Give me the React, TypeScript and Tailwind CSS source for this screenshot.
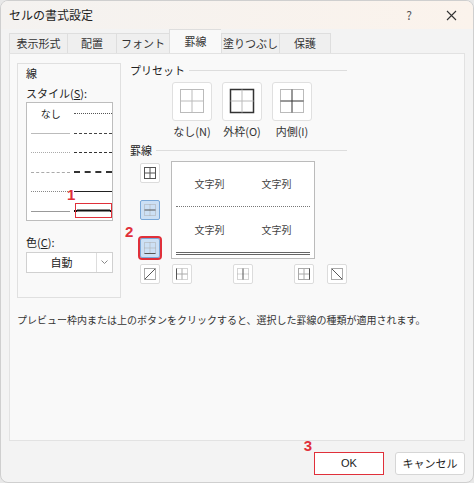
import React from "react";

const jp = { fontFamily: '"Noto Sans CJK JP", "Noto Sans", sans-serif' };

const Cell = ({ variant }: { variant: string }) => {
  const s = "#555";
  return (
    <svg width="14" height="14" viewBox="0 0 14 14">
      {variant === "all" && (
        <g stroke={s} fill="none" strokeWidth="1">
          <rect x="1.5" y="1.5" width="11" height="11" />
          <path d="M7 1.5V12.5M1.5 7H12.5" />
        </g>
      )}
      {variant === "mid" && (
        <g fill="none" strokeWidth="1">
          <rect x="1.5" y="1.5" width="11" height="11" stroke="#aaa" strokeDasharray="1 1" />
          <path d="M7 1.5V12.5" stroke="#aaa" strokeDasharray="1 1" />
          <path d="M1.5 7H12.5" stroke={s} />
        </g>
      )}
      {variant === "bottom" && (
        <g fill="none" strokeWidth="1">
          <rect x="1.5" y="1.5" width="11" height="11" stroke="#aaa" strokeDasharray="1 1" />
          <path d="M7 1.5V12.5M1.5 7H12.5" stroke="#aaa" strokeDasharray="1 1" />
          <path d="M1.5 12.5H12.5" stroke={s} />
        </g>
      )}
      {variant === "diag1" && (
        <g fill="none" strokeWidth="1">
          <rect x="1.5" y="1.5" width="11" height="11" stroke="#aaa" />
          <path d="M2 12L12 2" stroke={s} />
        </g>
      )}
      {variant === "diag2" && (
        <g fill="none" strokeWidth="1">
          <rect x="1.5" y="1.5" width="11" height="11" stroke="#aaa" />
          <path d="M2 2L12 12" stroke={s} />
        </g>
      )}
      {variant === "left" && (
        <g fill="none" strokeWidth="1">
          <rect x="1.5" y="1.5" width="11" height="11" stroke="#aaa" strokeDasharray="1 1" />
          <path d="M7 1.5V12.5M1.5 7H12.5" stroke="#aaa" />
          <path d="M1.5 1.5V12.5" stroke={s} />
        </g>
      )}
      {variant === "vmid" && (
        <g fill="none" strokeWidth="1">
          <rect x="1.5" y="1.5" width="11" height="11" stroke="#aaa" strokeDasharray="1 1" />
          <path d="M1.5 7H12.5" stroke="#aaa" strokeDasharray="1 1" />
          <path d="M7 1.5V12.5" stroke={s} />
        </g>
      )}
      {variant === "right" && (
        <g fill="none" strokeWidth="1">
          <rect x="1.5" y="1.5" width="11" height="11" stroke="#aaa" />
          <path d="M7 1.5V12.5M1.5 7H12.5" stroke="#aaa" />
          <path d="M12.5 1.5V12.5" stroke={s} />
        </g>
      )}
    </svg>
  );
};

const Preset = ({ kind, label }: { kind: string; label: string }) => (
  <div className="flex flex-col items-center w-[50px]">
    <div className="w-[40px] h-[39px] bg-white border border-[#e0e0e0] rounded-[3px] flex items-center justify-center">
      <svg width="26" height="26" viewBox="0 0 26 26">
        <rect x="1.5" y="1.5" width="23" height="23" fill="none"
          stroke={kind === "outer" ? "#333" : "#bbb"} strokeWidth={kind === "outer" ? 1.5 : 1} />
        <path d="M13 1.5V24.5M1.5 13H24.5" stroke={kind === "inner" ? "#333" : "#bbb"} strokeWidth="1" />
      </svg>
    </div>
    <span className="text-[11px] text-[#333] mt-[2px]">{label}</span>
  </div>
);

const SmallBtn = ({ v, selected, red }: { v: string; selected?: boolean; red?: boolean }) => (
  <div
    className={`w-[20px] h-[20px] flex items-center justify-center rounded-[2px] border ${
      selected ? "bg-[#cce0f5] border-[#7aa8d8]" : "bg-white border-[#dcdcdc]"
    } ${red ? "outline outline-2 outline-[#e0303a]" : ""}`}
  >
    <Cell variant={v} />
  </div>
);

const LineRow = ({ a, b }: { a: React.ReactNode; b: React.ReactNode }) => (
  <div className="flex items-center h-[19.5px]">
    <div className="w-[40px] ml-[4px] flex justify-center">{a}</div>
    <div className="w-[38px] ml-[4px]">{b}</div>
  </div>
);

const L = ({ style, w = 1, c = "#555" }: { style: string; w?: number; c?: string }) => (
  <div className="w-full" style={{ borderTop: `${w}px ${style} ${c}` }} />
);

const tabs = [
  { t: "表示形式", w: "w-[58px]" },
  { t: "配置", w: "w-[49px]" },
  { t: "フォント", w: "w-[53px]" },
  { t: "罫線", w: "w-[52px]" },
  { t: "塗りつぶし", w: "w-[58px]" },
  { t: "保護", w: "w-[52px]" },
];

export default function App() {
  return (
    <div className="w-[474px] h-[483px] bg-[#e8e8e8] relative text-[#222]" style={jp}>
      <div className="absolute inset-0 rounded-[8px] bg-[#f3f3f3] border border-[#cfcfcf] overflow-hidden flex flex-col">
        {/* title bar */}
        <div className="h-[28px] flex items-center px-[8px] bg-gradient-to-r from-[#f4f2f0] to-[#fbf3ec]">
          <span className="text-[12px] flex-1">セルの書式設定</span>
          <span className="text-[12px] text-[#555] mr-[34px]">?</span>
          <svg width="11" height="11" viewBox="0 0 11 11" className="mr-[8px]">
            <path d="M1 1L10 10M10 1L1 10" stroke="#333" strokeWidth="1.1" />
          </svg>
        </div>
        {/* tabs */}
        <div className="flex items-end h-[24px] pl-[8px] text-[11px] text-[#333]">
          {tabs.map(({ t, w }, i) => (
            <div
              key={t}
              className={`${w} whitespace-nowrap flex items-center justify-center border-t border-l border-[#dedede] ${
                t === "罫線" ? "h-[24px] bg-[#f9f9f9]" : "h-[20px] bg-[#efefef]"
              } ${i === tabs.length - 1 ? "border-r" : ""}`}
            >
              {t}
            </div>
          ))}
        </div>
        {/* panel */}
        <div className="mx-[8px] h-[388px] bg-[#f9f9f9] border border-[#e2e2e2]">
          <div className="flex">
            {/* 線 group */}
            <div className="ml-[7px] mt-[9px] w-[104px] h-[235px] border border-[#e0e0e0] px-[8px] pt-[1px] text-[11px]">
              <div>線</div>
              <div className="mt-[3px]">スタイル(<u>S</u>):</div>
              <div className="mt-[1px] w-[87px] h-[119px] bg-white border border-[#bdbdbd] pt-[1px] relative">
                <LineRow a={<span className="text-[10px]">なし</span>} b={<L style="dotted" />} />
                <LineRow a={<L style="solid" w={1} c="#bbb" />} b={<L style="dashed" w={1} c="#444" />} />
                <LineRow a={<L style="dotted" c="#aaa" />} b={<L style="dashed" w={1} c="#333" />} />
                <LineRow a={<L style="dashed" c="#aaa" />} b={<L style="dashed" w={2} c="#333" />} />
                <LineRow a={<L style="dotted" c="#888" />} b={<L style="solid" w={1} c="#222" />} />
                <LineRow a={<L style="solid" c="#999" />} b={<L style="solid" w={2} c="#111" />} />
                <div className="absolute left-[48px] top-[100px] w-[37px] h-[15px] border border-[#e0303a] flex items-center px-[1px]">
                  <div className="w-full border-t-[3px] border-double border-[#888]" />
                </div>
                <span className="absolute left-[40px] top-[84px] text-[#e0303a] font-bold text-[15px] leading-none" style={{ fontFamily: "Liberation Sans, sans-serif" }}>1</span>
              </div>
              <div className="mt-[13px]">色(<u>C</u>):</div>
              <div className="mt-[1px] w-[87px] h-[21px] bg-white border border-[#d0d0d0] flex">
                <div className="flex-1 flex items-center justify-center text-[11px]">自動</div>
                <div className="w-[16px] border-l border-[#ddd] flex items-center justify-center">
                  <svg width="7" height="5" viewBox="0 0 7 5"><path d="M0.5 0.5L3.5 3.5L6.5 0.5" stroke="#888" fill="none" /></svg>
                </div>
              </div>
            </div>
            {/* right */}
            <div className="ml-[9px] mt-[8px] text-[11px]">
              <div className="flex items-center w-[217px]">
                <span>プリセット</span>
                <div className="flex-1 border-t border-[#ddd] ml-[4px]" />
              </div>
              <div className="flex ml-[37px] mt-[3px]">
                <Preset kind="none" label="なし(N)" />
                <Preset kind="outer" label="外枠(O)" />
                <Preset kind="inner" label="内側(I)" />
              </div>
              <div className="flex items-center w-[217px] mt-[3px]">
                <span>罫線</span>
                <div className="flex-1 border-t border-[#ddd] ml-[4px]" />
              </div>
              <div className="flex mt-[2px] relative">
                <div className="flex flex-col ml-[10px] mt-[2px]">
                  <SmallBtn v="all" />
                  <div className="h-[17px]" />
                  <SmallBtn v="mid" selected />
                  <div className="h-[18px]" />
                  <SmallBtn v="bottom" selected red />
                  <span className="absolute left-[-5px] top-[63px] text-[#e0303a] font-bold text-[15px] leading-none" style={{ fontFamily: "Liberation Sans, sans-serif" }}>2</span>
                </div>
                <div className="ml-[11px] w-[144px] h-[98px] bg-white border border-[#bbb] flex flex-col px-[4px] text-[10px] text-[#444]">
                  <div className="flex-1 flex items-center justify-around">
                    <span>文字列</span><span>文字列</span>
                  </div>
                  <div className="border-t border-dotted border-[#777]" />
                  <div className="flex-1 flex items-center justify-around">
                    <span>文字列</span><span>文字列</span>
                  </div>
                  <div className="border-t-[3px] border-double border-[#666] mb-[3px]" />
                </div>
              </div>
              <div className="flex mt-[5px] ml-[10px]">
                <SmallBtn v="diag1" />
                <div className="ml-[12px]"><SmallBtn v="left" /></div>
                <div className="ml-[41px]"><SmallBtn v="vmid" /></div>
                <div className="ml-[41px]"><SmallBtn v="right" /></div>
                <div className="ml-[13px]"><SmallBtn v="diag2" /></div>
              </div>
            </div>
          </div>
          <div className="ml-[7px] mt-[14px] text-[10px] text-[#333]">
            プレビュー枠内または上のボタンをクリックすると、選択した罫線の種類が適用されます。
          </div>
        </div>
        {/* buttons */}
        <div className="flex justify-end gap-[11px] mt-[11px] mr-[8px] relative">
          <span className="absolute right-[153px] top-[-14px] text-[#e0303a] font-bold text-[15px] leading-none" style={{ fontFamily: "Liberation Sans, sans-serif" }}>3</span>
          <div className="w-[70px] h-[23px] bg-white border border-[#e0303a] flex items-center justify-center text-[11px]" style={{ fontFamily: "Liberation Sans, sans-serif" }}>OK</div>
          <div className="w-[70px] h-[23px] bg-white border border-[#d6d6d6] rounded-[3px] flex items-center justify-center text-[11px]">キャンセル</div>
        </div>
      </div>
    </div>
  );
}
